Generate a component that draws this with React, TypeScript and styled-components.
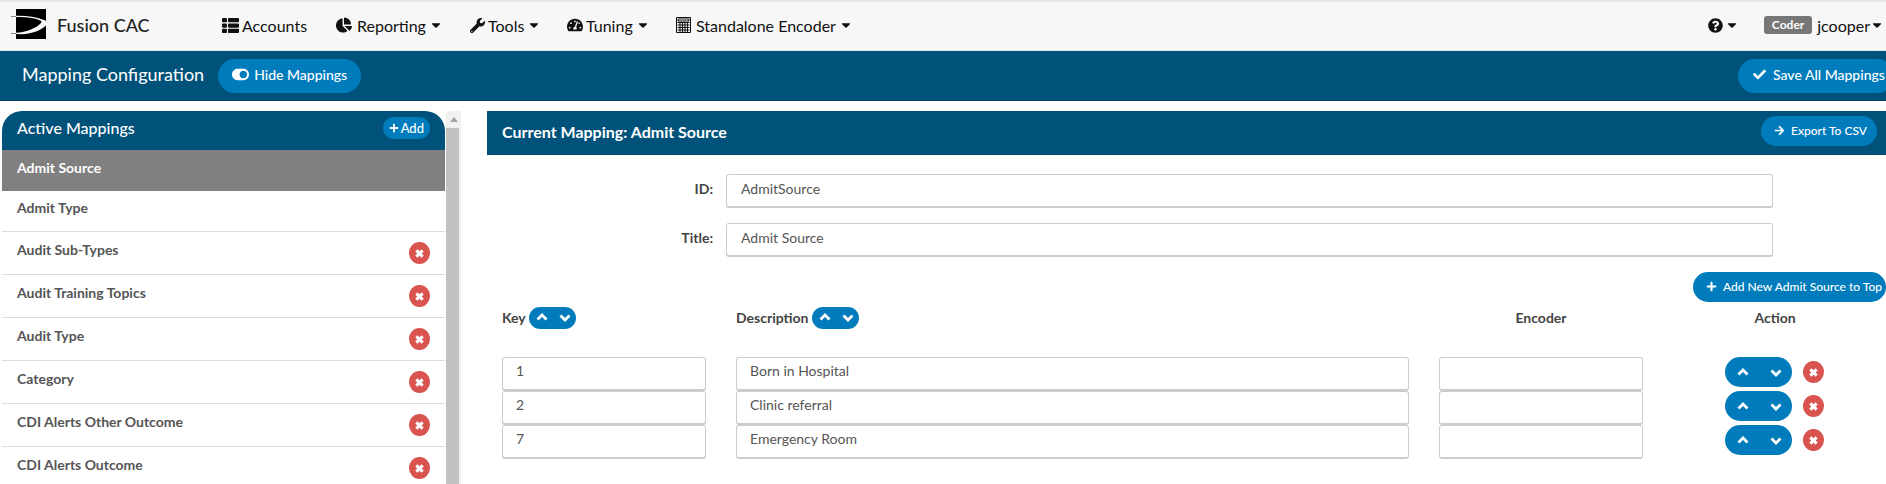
import { Fragment } from 'react';
import styled, { createGlobalStyle } from 'styled-components';
import {
  FaArrowRight,
  FaCaretDown,
  FaChartPie,
  FaCheck,
  FaPlus,
  FaQuestionCircle,
  FaTachometerAlt,
  FaThList,
  FaToggleOn,
  FaWrench,
} from 'react-icons/fa';

const GlobalStyle = createGlobalStyle`
  html, body {
    margin: 0;
    padding: 0;
    height: 484px;
    overflow: hidden;
    background: #fff;
    font-family: Lato, "Open Sans", sans-serif;
    color: #444;
  }
  * {
    box-sizing: border-box;
  }
`;

const Page = styled.div`
  width: 1886px;
  height: 484px;
  overflow: hidden;
  display: flex;
  flex-direction: column;
`;

const NavBar = styled.nav`
  height: 51px;
  flex: none;
  display: flex;
  align-items: center;
  background: #f7f7f7;
  border-top: 2px solid #e7e7e7;
  border-bottom: 1px solid #e7e7e7;
  padding: 0 2px 2px 11px;
  color: #111;
`;

const Brand = styled.div`
  width: 211px;
  display: flex;
  align-items: center;
  gap: 9px;
  font-size: 18px;
  font-weight: 500;
  color: #222;
`;

const NavItem = styled.div<{ $width: number; $iconGap?: number }>`
  width: ${(props) => props.$width}px;
  flex: none;
  display: flex;
  align-items: center;
  gap: 3px;
  font-size: 16px;
  svg {
    flex: none;
  }
  svg:first-child {
    margin-right: ${(props) => props.$iconGap ?? 0}px;
  }
`;

const RightNav = styled.div`
  margin-left: auto;
  display: flex;
  align-items: center;
  font-size: 16px;
`;

const HelpMenu = styled.div`
  display: flex;
  align-items: center;
  gap: 2px;
  margin-right: 25px;
`;

const RoleBadge = styled.span`
  background: #777;
  color: #fff;
  font-size: 12px;
  font-weight: 700;
  height: 18px;
  line-height: 18px;
  border-radius: 3px;
  padding: 0 8px;
  margin-right: 5px;
`;

const SubHeader = styled.div`
  height: 50px;
  flex: none;
  display: flex;
  align-items: center;
  background: #00527a;
  border-bottom: 1px solid #003f5e;
  padding-left: 22px;
  color: #fff;
`;

const PageTitle = styled.div`
  font-size: 18px;
  margin: 0 14px 4px 0;
`;

const PillButton = styled.button`
  height: 34px;
  flex: none;
  display: inline-flex;
  align-items: center;
  gap: 5px;
  border: none;
  background: #007cbd;
  color: #fff;
  border-radius: 17px;
  font-family: inherit;
  font-size: 14px;
  font-weight: 500;
  padding: 0 14px 3px;
  white-space: nowrap;
  svg {
    flex: none;
  }
`;

const SaveButton = styled(PillButton)`
  margin-left: auto;
  margin-right: -8px;
  gap: 7px;
  width: 156px;
  padding: 0 0 3px 15px;
`;

const Content = styled.div`
  flex: 1;
  min-height: 0;
  display: flex;
  padding-top: 10px;
`;

const Sidebar = styled.aside`
  width: 445px;
  flex: none;
  padding-left: 2px;
`;

const SidebarHeader = styled.div`
  height: 39px;
  display: flex;
  align-items: center;
  justify-content: space-between;
  background: #00527a;
  color: #fff;
  border-radius: 20px 20px 0 0;
  padding: 0 15px 6px;
  font-size: 16px;
  font-weight: 500;
`;

const AddButton = styled(PillButton)`
  height: 22px;
  padding: 0 6px;
  gap: 2px;
  font-size: 13px;
`;

const MappingRow = styled.div<{ $active?: boolean; $height: number }>`
  height: ${(props) => props.$height}px;
  display: flex;
  align-items: center;
  justify-content: space-between;
  padding: 0 15px;
  font-size: 14px;
  font-weight: 700;
  color: ${(props) => (props.$active ? '#fff' : '#555')};
  background: ${(props) => (props.$active ? '#808080' : '#fff')};
  border-bottom: ${(props) => (props.$active ? 'none' : '1px solid #ddd')};
`;

const MappingName = styled.span`
  padding-bottom: 7px;
`;

const RemoveButton = styled.span`
  width: 21px;
  height: 22px;
  flex: none;
  display: flex;
  align-items: center;
  justify-content: center;
  border-radius: 50%;
  background: #d9534f;
`;

const Scrollbar = styled.div`
  width: 15px;
  flex: none;
  margin-left: 1px;
  display: flex;
  flex-direction: column;
  background: #f1f1f1;
`;

const ScrollArrow = styled.div`
  height: 17px;
  display: flex;
  align-items: center;
  justify-content: center;
  &::before {
    content: '';
    border-left: 4px solid transparent;
    border-right: 4px solid transparent;
    border-bottom: 5px solid #a3a3a3;
  }
`;

const ScrollThumb = styled.div`
  flex: 1;
  margin-right: 2px;
  background: #c1c1c1;
`;

const Panel = styled.main`
  flex: 1;
  min-width: 0;
  margin-left: 26px;
`;

const PanelHeader = styled.div`
  height: 44px;
  display: flex;
  align-items: center;
  justify-content: space-between;
  background: #00527a;
  color: #fff;
  padding: 0 9px 4px 15px;
  font-size: 16px;
  font-weight: 700;
`;

const ExportButton = styled(PillButton)`
  height: 30px;
  width: 116px;
  padding: 0 0 1px 13px;
  gap: 6px;
  font-size: 12px;
`;

const FormRow = styled.div<{ $first?: boolean }>`
  display: flex;
  align-items: center;
  height: 34px;
  margin-top: ${(props) => (props.$first ? 19 : 15)}px;
  padding-right: 113px;
`;

const FormLabel = styled.label`
  width: 226px;
  flex: none;
  text-align: right;
  font-size: 14px;
  font-weight: 700;
  color: #444;
  padding-bottom: 5px;
`;

const TextField = styled.div`
  flex: 1;
  height: 34px;
  display: flex;
  align-items: center;
  padding: 0 12px 7px 13px;
  background: #fff;
  border: 1px solid #ccc;
  border-bottom-width: 2px;
  border-radius: 3px;
  font-size: 14px;
  color: #555;
`;

const FormInput = styled(TextField)`
  margin-left: 13px;
  padding: 0 12px 5px 14px;
`;

const AddRow = styled.div`
  display: flex;
  justify-content: flex-end;
  margin-top: 15px;
`;

const AddRowButton = styled(PillButton)`
  height: 30px;
  width: 193px;
  gap: 6px;
  font-size: 12px;
  padding: 0 0 1px 13px;
`;

const MappingTable = styled.div`
  display: grid;
  grid-template-columns: 204px 673px 204px 1fr;
  column-gap: 30px;
  padding-left: 15px;
`;

const ColumnHeader = styled.div<{ $center?: boolean }>`
  height: 55px;
  padding-bottom: 24px;
  display: flex;
  align-items: center;
  justify-content: ${(props) => (props.$center ? 'center' : 'flex-start')};
  gap: 3px;
  font-size: 14px;
  font-weight: 700;
  color: #444;
`;

const ActionHeader = styled(ColumnHeader)`
  padding-right: 9px;
`;

const SortPair = styled.span<{ $large?: boolean }>`
  display: inline-flex;
  align-items: center;
  justify-content: space-between;
  width: ${(props) => (props.$large ? 67 : 47)}px;
  height: ${(props) => (props.$large ? 30 : 22)}px;
  padding: ${(props) => (props.$large ? '0 10px 0 12px' : '0 5px 0 7px')};
  border-radius: 15px;
  background: #007cbd;
`;

const ActionCell = styled.div`
  height: 34px;
  display: flex;
  align-items: center;
  gap: 11px;
  padding: 0 0 4px 52px;
`;

const Chevron = ({ down }: { down?: boolean }) => (
  <svg width="12" height="9" viewBox="0 0 12 9" aria-hidden="true">
    <path
      d={down ? 'M1.5 2.5L6 7L10.5 2.5' : 'M1.5 6.5L6 2L10.5 6.5'}
      fill="none"
      stroke="#fff"
      strokeWidth="2.8"
    />
  </svg>
);

const CrossMark = () => (
  <svg width="9" height="9" viewBox="0 0 10 10" aria-hidden="true">
    <path d="M1.5 1.5L8.5 8.5M8.5 1.5L1.5 8.5" fill="none" stroke="#fff" strokeWidth="3.4" />
  </svg>
);

const LogoMark = () => (
  <svg width="37" height="32" viewBox="0 0 37 32" aria-hidden="true">
    <rect x="5" y="0" width="30" height="30" fill="#000" />
    <path d="M1 7.5C12 7 24 8 30 11" fill="none" stroke="#f7f7f7" strokeWidth="1.4" />
    <path d="M1 24C14 24 26 19 30 14C31 12 30 11 27 9.5C32 10 37 12 36 15C33 21 15 28 1 24Z" fill="#f7f7f7" />
    <path d="M0 7.5H5M0 24.5H5" stroke="#666" strokeWidth="0.8" />
  </svg>
);

const CalculatorIcon = () => (
  <svg width="15" height="16" viewBox="0 0 15 16" aria-hidden="true">
    <path
      d="M0.5 0.5H14.5V15.5H0.5ZM2 2V4H13V2ZM1.5 5.5H13.5M1.5 8H13.5M1.5 10.5H13.5M1.5 13H13.5M4 5.5V15M6.5 5.5V15M9 5.5V15M11.5 5.5V15"
      fill="none"
      stroke="#111"
      strokeWidth="1"
    />
  </svg>
);

const mappings = [
  'Audit Sub-Types',
  'Audit Training Topics',
  'Audit Type',
  'Category',
  'CDI Alerts Other Outcome',
  'CDI Alerts Outcome',
];

const rows = [
  { key: '1', description: 'Born in Hospital' },
  { key: '2', description: 'Clinic referral' },
  { key: '7', description: 'Emergency Room' },
];

const App = () => {
  return (
    <Page>
      <GlobalStyle />
      <NavBar>
        <Brand>
          <LogoMark />
          Fusion CAC
        </Brand>
        <NavItem $width={114}>
          <FaThList size={17} />
          Accounts
        </NavItem>
        <NavItem $width={134} $iconGap={2}>
          <FaChartPie size={16} />
          <span>Reporting</span>
          <FaCaretDown size={14} />
        </NavItem>
        <NavItem $width={97}>
          <FaWrench size={15} />
          Tools
          <FaCaretDown size={14} />
        </NavItem>
        <NavItem $width={109}>
          <FaTachometerAlt size={16} />
          Tuning
          <FaCaretDown size={14} />
        </NavItem>
        <NavItem $width={180} $iconGap={2}>
          <CalculatorIcon />
          Standalone Encoder
          <FaCaretDown size={14} />
        </NavItem>
        <RightNav>
          <HelpMenu>
            <FaQuestionCircle size={15} />
            <FaCaretDown size={14} />
          </HelpMenu>
          <RoleBadge>Coder</RoleBadge>
          jcooper
          <FaCaretDown size={14} />
        </RightNav>
      </NavBar>

      <SubHeader>
        <PageTitle>Mapping Configuration</PageTitle>
        <PillButton>
          <FaToggleOn size={17} />
          Hide Mappings
        </PillButton>
        <SaveButton>
          <FaCheck size={13} />
          Save All Mappings
        </SaveButton>
      </SubHeader>

      <Content>
        <Sidebar>
          <SidebarHeader>
            Active Mappings
            <AddButton>
              <FaPlus size={10} />
              Add
            </AddButton>
          </SidebarHeader>
          <MappingRow $active $height={41}>
            <MappingName>Admit Source</MappingName>
          </MappingRow>
          <MappingRow $height={41}>
            <MappingName>Admit Type</MappingName>
          </MappingRow>
          {mappings.map((name) => (
            <MappingRow key={name} $height={43}>
              <MappingName>{name}</MappingName>
              <RemoveButton>
                <CrossMark />
              </RemoveButton>
            </MappingRow>
          ))}
        </Sidebar>
        <Scrollbar>
          <ScrollArrow />
          <ScrollThumb />
        </Scrollbar>

        <Panel>
          <PanelHeader>
            Current Mapping: Admit Source
            <ExportButton>
              <FaArrowRight size={11} />
              Export To CSV
            </ExportButton>
          </PanelHeader>
          <FormRow $first>
            <FormLabel>ID:</FormLabel>
            <FormInput>AdmitSource</FormInput>
          </FormRow>
          <FormRow>
            <FormLabel>Title:</FormLabel>
            <FormInput>Admit Source</FormInput>
          </FormRow>
          <AddRow>
            <AddRowButton>
              <FaPlus size={11} />
              Add New Admit Source to Top
            </AddRowButton>
          </AddRow>
          <MappingTable>
            <ColumnHeader>
              Key
              <SortPair>
                <Chevron />
                <Chevron down />
              </SortPair>
            </ColumnHeader>
            <ColumnHeader>
              Description
              <SortPair>
                <Chevron />
                <Chevron down />
              </SortPair>
            </ColumnHeader>
            <ColumnHeader $center>Encoder</ColumnHeader>
            <ActionHeader $center>Action</ActionHeader>
            {rows.map((row) => (
              <Fragment key={row.key}>
                <TextField>{row.key}</TextField>
                <TextField>{row.description}</TextField>
                <TextField />
                <ActionCell>
                  <SortPair $large>
                    <Chevron />
                    <Chevron down />
                  </SortPair>
                  <RemoveButton>
                    <CrossMark />
                  </RemoveButton>
                </ActionCell>
              </Fragment>
            ))}
          </MappingTable>
        </Panel>
      </Content>
    </Page>
  );
};

export default App;
